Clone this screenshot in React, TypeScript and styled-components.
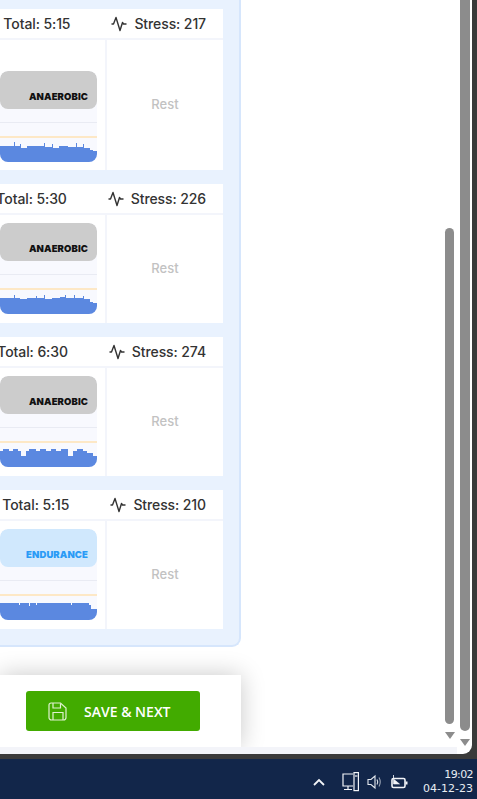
import React from 'react';
import styled, { createGlobalStyle } from 'styled-components';

const GlobalStyle = createGlobalStyle`
    html, body {
        margin: 0;
        padding: 0;
        background: #3a3a3a;
    }
    * {
        box-sizing: border-box;
    }
`;

const Desktop = styled.div`
    width: 477px;
    height: 799px;
    display: flex;
    flex-direction: column;
    overflow: hidden;
    background: #3a3a3a;
    font-family: Inter, 'Open Sans', sans-serif;
`;

const WindowWrap = styled.div`
    flex: 1;
    min-height: 0;
    padding: 0 5px 5px 0;
`;

const WindowFrame = styled.div`
    height: 100%;
    display: flex;
    background: #fff;
    border-bottom-right-radius: 9px;
    overflow: hidden;
`;

const PageArea = styled.div`
    width: 457px;
    display: flex;
    flex-direction: column;
`;

const ScrollRow = styled.div`
    height: 747px;
    display: flex;
`;

const Content = styled.div`
    width: 241px;
    display: flex;
    flex-direction: column;
`;

const Panel = styled.div`
    height: 647px;
    padding: 9px 16px 0 0;
    display: flex;
    flex-direction: column;
    gap: 14px;
    background: #e9f2fe;
    border-right: 2px solid #d6e6fc;
    border-bottom: 2px solid #d6e6fc;
    border-bottom-right-radius: 9px;
    overflow: hidden;
`;

const Card = styled.section`
    background: #fff;
    flex-shrink: 0;
`;

const CardHeader = styled.div`
    height: 31px;
    padding-right: 17px;
    display: flex;
    align-items: center;
    justify-content: flex-end;
    border-bottom: 2px solid #f3f5fb;
    color: #333;
    font-size: 14px;
    font-weight: 500;
    letter-spacing: -0.1px;
    white-space: nowrap;
`;

const TotalText = styled.span`
    flex-shrink: 0;
    margin-right: 41px;
`;

const StressIcon = styled.svg`
    flex-shrink: 0;
    margin-right: 7px;
`;

const StressText = styled.span`
    flex-shrink: 0;
`;

const CardBody = styled.div<{ $height: number }>`
    height: ${(p) => p.$height}px;
    display: flex;
`;

const ChartCell = styled.div<{ $top: number }>`
    flex: 1;
    padding: ${(p) => p.$top}px 8px 0 0;
    display: flex;
    flex-direction: column;
`;

const Chart = styled.div`
    height: 91px;
    display: flex;
    flex-direction: column;
    background: #f8f9fe;
    border-radius: 8px;
    overflow: hidden;
`;

const Zone = styled.div<{ $bg: string; $color: string }>`
    height: 38px;
    flex-shrink: 0;
    padding: 0 9px 6px 0;
    display: flex;
    align-items: flex-end;
    justify-content: flex-end;
    background: ${(p) => p.$bg};
    color: ${(p) => p.$color};
    border-radius: 8px;
    font-size: 9.5px;
    line-height: 12px;
    font-weight: 900;
    letter-spacing: 0.1px;
`;

const Plot = styled.div`
    flex: 1;
    padding-top: 13px;
    display: flex;
    flex-direction: column;
`;

const GridLine = styled.div`
    height: 1px;
    background: #e9ebf3;
`;

const TargetLine = styled.div`
    height: 2px;
    margin-top: 13px;
    background: #fde8c6;
`;

const Bars = styled.svg`
    display: block;
    margin-top: auto;
`;

const RestCell = styled.div`
    width: 118px;
    flex-shrink: 0;
    padding-bottom: 2px;
    display: flex;
    align-items: center;
    justify-content: center;
    border-left: 2px solid #f3f5fb;
    color: #c2c2c2;
    font-size: 13px;
    font-weight: 500;
`;

const Footer = styled.div`
    position: relative;
    height: 72px;
    margin-top: 28px;
    padding-left: 26px;
    display: flex;
    align-items: center;
    background: #fff;
    box-shadow: 0 0 24px rgba(0, 0, 0, 0.22);
`;

const SaveButton = styled.button`
    width: 174px;
    height: 40px;
    padding: 0 0 0 22px;
    display: flex;
    align-items: center;
    gap: 17px;
    border: none;
    border-radius: 3px;
    background: #42ab00;
    color: #fff;
    font-family: 'Open Sans', sans-serif;
    font-size: 14px;
    font-weight: 600;
`;

const ThumbGutter = styled.div`
    width: 9px;
    margin-left: auto;
    margin-right: 3px;
    padding-top: 228px;
    display: flex;
    flex-direction: column;
    align-items: center;
`;

const InnerThumb = styled.div`
    width: 9px;
    height: 496px;
    border-radius: 5px;
    background: #8c8c8c;
`;

const ArrowDown = styled.div<{ $top: number }>`
    margin-top: ${(p) => p.$top}px;
    width: 0;
    height: 0;
    border-left: 5px solid transparent;
    border-right: 5px solid transparent;
    border-top: 7px solid #8c8c8c;
`;

const BottomBand = styled.div`
    position: relative;
    flex: 1;
    background: #f3f4f9;
`;

const OuterBar = styled.div`
    width: 10px;
    margin-left: 3px;
    display: flex;
    flex-direction: column;
    align-items: center;
`;

const OuterThumb = styled.div`
    width: 10px;
    height: 731px;
    border-radius: 0 0 5px 5px;
    background: #8c8c8c;
`;

const Taskbar = styled.footer`
    height: 40px;
    flex-shrink: 0;
    padding-right: 4px;
    display: flex;
    align-items: center;
    justify-content: flex-end;
    background: #12264a;
    color: #e8ecf2;
`;

const Tray = styled.div`
    display: flex;
    align-items: center;
    gap: 8px;
    margin-right: 15px;
    margin-top: 6px;
`;

const Chevron = styled.svg`
    margin-right: 9px;
`;

const Clock = styled.div`
    display: flex;
    flex-direction: column;
    align-items: flex-end;
    font-family: 'DejaVu Sans', sans-serif;
    font-size: 11px;
    line-height: 14px;
    margin-top: 5px;
`;

const ClockTime = styled.span`
    letter-spacing: -0.6px;
`;

type Segment = [number, number];

// [x where the step ends, top of the blue area at that step]
const SPIKY_A: Segment[] = [
    [14, 4], [15, 0], [20, 4], [21, 2], [27, 6], [44, 4], [45, 1], [52, 5], [53, 2], [59, 6], [68, 4],
    [76, 5], [77, 1], [83, 5], [84, 2], [90, 6], [93, 8], [97, 9],
];
const SPIKY_B: Segment[] = [
    [14, 4], [15, 1], [20, 4], [27, 5], [36, 4], [37, 2], [44, 4], [45, 1], [52, 5], [60, 4], [65, 3],
    [66, 1], [74, 4], [75, 1], [83, 4], [84, 2], [90, 5], [93, 8], [97, 9],
];
const BLOCKS: Segment[] = [
    [3, 4], [9, 2], [13, 4], [18, 2], [21, 4], [26, 9], [29, 4], [36, 2], [40, 4], [46, 2], [51, 4],
    [56, 2], [61, 4], [68, 2], [73, 9], [77, 4], [83, 2], [87, 4], [93, 6], [97, 9],
];
const DENSE: Segment[] = [
    [19, 3], [20, 5], [29, 3], [30, 6], [36, 3], [37, 5], [71, 3], [72, 5], [89, 3], [91, 5], [97, 9],
];

const barsPath = (segments: Segment[]) => {
    let x = 0;
    const points = segments.map(([end, top]) => {
        const step = `H${x} V${top} H${end}`;
        x = end;
        return step;
    });
    return `M0 20 ${points.join(' ')} V20 Z`;
};

const ANAEROBIC = { label: 'ANAEROBIC', bg: '#cccccc', color: '#111111' };
const ENDURANCE = { label: 'ENDURANCE', bg: '#d0e8fd', color: '#2a9bf6' };

const WEEKS = [
    { total: '5:15', stress: 217, height: 130, top: 31, zone: ANAEROBIC, bars: SPIKY_A },
    { total: '5:30', stress: 226, height: 108, top: 8, zone: ANAEROBIC, bars: SPIKY_B },
    { total: '6:30', stress: 274, height: 108, top: 8, zone: ANAEROBIC, bars: BLOCKS },
    { total: '5:15', stress: 210, height: 108, top: 8, zone: ENDURANCE, bars: DENSE },
];

const PulseIcon = () => (
    <StressIcon width="16" height="17" viewBox="0 0 16 17" fill="none" stroke="#333" strokeWidth="1.4">
        <path d="M0.5 9 H2.5 L5 2.5 L9 15.5 L11.5 7.5 L12.5 9 H15.5" strokeLinejoin="round" />
    </StressIcon>
);

const FloppyIcon = () => (
    <svg width="19" height="19" viewBox="0 0 19 19" fill="none" stroke="#dff2d0" strokeWidth="1.2">
        <path d="M3 1 H12.5 L18 6 V15.5 A2.5 2.5 0 0 1 15.5 18 H3.5 A2.5 2.5 0 0 1 1 15.5 V3 A2 2 0 0 1 3 1 Z" />
        <path d="M5 1 V6 H12.5 V1.5" />
        <path d="M5 18 V10.5 H15 V18" />
    </svg>
);

const MonitorIcon = () => (
    <svg width="17" height="20" viewBox="0 0 17 20" fill="none" stroke="#f2f4f8" strokeWidth="1.2">
        <path d="M11 2 H1 V14 H11" />
        <path d="M6 14 V17 M2 17.5 H10" />
        <rect x="12" y="0.6" width="4.4" height="18" fill="#12264a" />
        <path d="M13 4 H15.5" />
    </svg>
);

const SpeakerIcon = () => (
    <svg width="16" height="16" viewBox="0 0 16 16" fill="none" stroke="#e4e8ee" strokeWidth="1.1">
        <path d="M1 5.5 H4 L8 2 V14 L4 10.5 H1 Z" />
        <path d="M10 5.5 Q11.5 8 10 10.5" />
        <path d="M12 3.5 Q14.5 8 12 12.5" strokeOpacity="0.65" />
    </svg>
);

const BatteryIcon = () => (
    <svg width="17" height="16" viewBox="0 0 17 16" fill="none" stroke="#f2f4f8" strokeWidth="1.6">
        <rect x="1" y="4.5" width="13" height="9" rx="1.5" />
        <path d="M15.5 7.5 V10.5" strokeWidth="2" />
        <path d="M2.5 1 V5 L8.5 10 H2.5 Z" fill="#f2f4f8" strokeWidth="0.6" />
    </svg>
);

const App = () => (
    <>
        <GlobalStyle />
        <Desktop>
            <WindowWrap>
                <WindowFrame>
                    <PageArea>
                        <ScrollRow>
                            <Content>
                                <Panel>
                                    {WEEKS.map((week) => (
                                        <Card key={week.stress}>
                                            <CardHeader>
                                                <TotalText>Total: {week.total}</TotalText>
                                                <PulseIcon />
                                                <StressText>Stress: {week.stress}</StressText>
                                            </CardHeader>
                                            <CardBody $height={week.height}>
                                                <ChartCell $top={week.top}>
                                                    <Chart>
                                                        <Zone $bg={week.zone.bg} $color={week.zone.color}>
                                                            {week.zone.label}
                                                        </Zone>
                                                        <Plot>
                                                            <GridLine />
                                                            <TargetLine />
                                                            <Bars width="97" height="20" viewBox="0 0 97 20">
                                                                <path d={barsPath(week.bars)} fill="#5b88e0" />
                                                            </Bars>
                                                        </Plot>
                                                    </Chart>
                                                </ChartCell>
                                                <RestCell>Rest</RestCell>
                                            </CardBody>
                                        </Card>
                                    ))}
                                </Panel>
                                <Footer>
                                    <SaveButton>
                                        <FloppyIcon />
                                        SAVE &amp; NEXT
                                    </SaveButton>
                                </Footer>
                            </Content>
                            <ThumbGutter>
                                <InnerThumb />
                                <ArrowDown $top={8} />
                            </ThumbGutter>
                        </ScrollRow>
                        <BottomBand />
                    </PageArea>
                    <OuterBar>
                        <OuterThumb />
                        <ArrowDown $top={8} />
                    </OuterBar>
                </WindowFrame>
            </WindowWrap>
            <Taskbar>
                <Tray>
                    <Chevron width="12" height="8" viewBox="0 0 12 8" fill="none" stroke="#f2f4f8" strokeWidth="1.8">
                        <path d="M1 7 L6 2 L11 7" />
                    </Chevron>
                    <MonitorIcon />
                    <SpeakerIcon />
                    <BatteryIcon />
                </Tray>
                <Clock>
                    <ClockTime>19:02</ClockTime>
                    <span>04-12-23</span>
                </Clock>
            </Taskbar>
        </Desktop>
    </>
);

export default App;
